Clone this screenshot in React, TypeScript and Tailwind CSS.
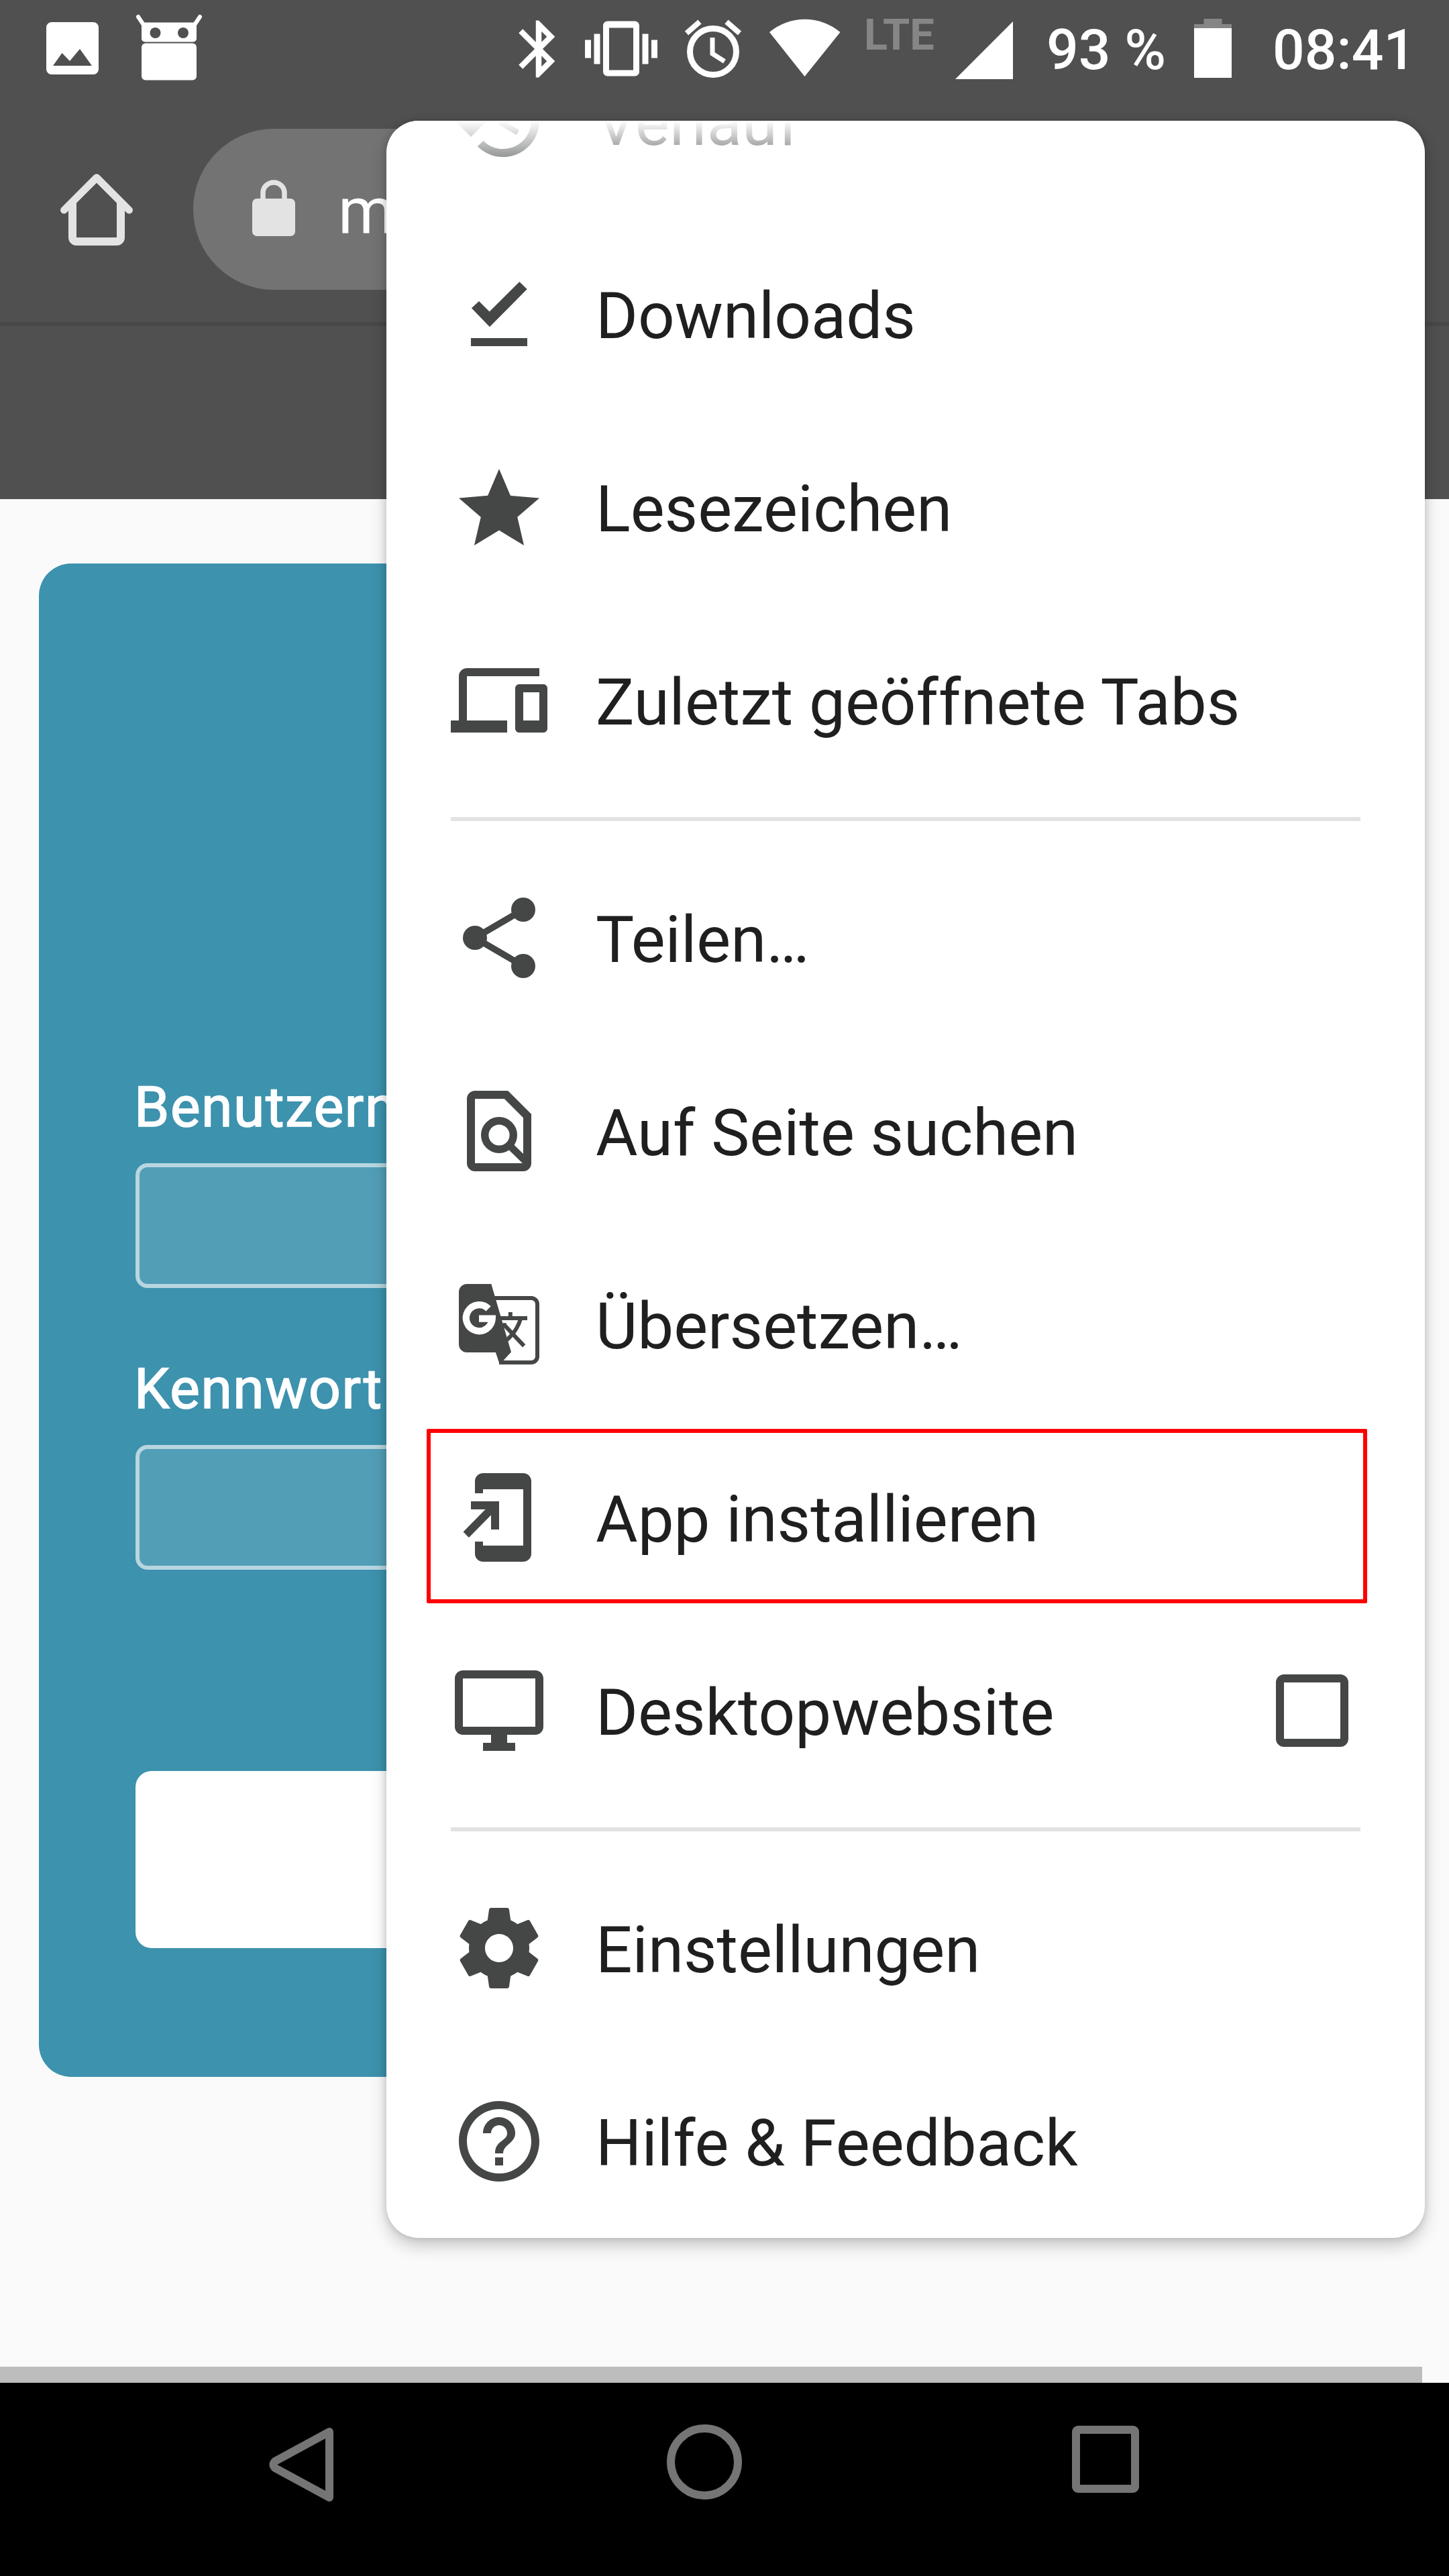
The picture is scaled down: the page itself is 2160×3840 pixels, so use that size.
import type { ReactNode } from "react";

function Icon({ children, className = "" }: { children: ReactNode; className?: string }) {
  return (
    <svg viewBox="0 0 24 24" fill="currentColor" className={`size-36 shrink-0 ${className}`}>
      {children}
    </svg>
  );
}

const icons = {
  history: (
    <path d="M13 3c-4.97 0-9 4.03-9 9H1l3.89 3.89.07.14L9 12H6c0-3.87 3.13-7 7-7s7 3.13 7 7-3.13 7-7 7c-1.93 0-3.68-.79-4.94-2.06l-1.42 1.42C8.27 19.99 10.51 21 13 21c4.97 0 9-4.03 9-9s-4.03-9-9-9zm-1 5v5l4.28 2.54.72-1.21-3.5-2.08V8H12z" />
  ),
  downloads: (
    <>
      <path d="M5.15 10.55 7 8.85 9.6 11.4 17.05 4 18.95 5.85 9.65 15.2z" />
      <path d="M5 18h14v2H5z" />
    </>
  ),
  star: (
    <path
      transform="translate(0 .5)"
      d="M12 17.27 18.18 21l-1.64-7.03L22 9.24l-7.19-.61L12 2 9.19 8.63 2 9.24l5.46 4.73L5.82 21z"
    />
  ),
  devices: (
    <path d="M4 6h18V4H4c-1.1 0-2 .9-2 2v11H0v3h14v-3H4V6zm19 2h-6c-.55 0-1 .45-1 1v10c0 .55.45 1 1 1h6c.55 0 1-.45 1-1V9c0-.55-.45-1-1-1zm-1 9h-4v-7h4v7z" />
  ),
  share: (
    <g>
      <path d="M18 5 6 12l12 7" fill="none" stroke="currentColor" strokeWidth="1.6" />
      <circle cx="18" cy="5" r="3" />
      <circle cx="6" cy="12" r="3" />
      <circle cx="18" cy="19" r="3" />
    </g>
  ),
  find: (
    <g>
      <path
        fillRule="evenodd"
        d="M6 2h8.2L20 7.8V20a2 2 0 0 1-2 2H6a2 2 0 0 1-2-2V4a2 2 0 0 1 2-2zm0 2v16h12V8.7L13.3 4z"
      />
      <circle cx="12" cy="13" r="3.55" fill="none" stroke="currentColor" strokeWidth="1.9" />
      <path d="m14.6 15.6 4.4 4.3" stroke="currentColor" strokeWidth="1.8" />
    </g>
  ),
  translate: (
    <g>
      <path
        d="M10.6 5.5H20A1.5 1.5 0 0 1 21.5 7v13a1.5 1.5 0 0 1-1.5 1.5h-8"
        fill="none"
        stroke="currentColor"
        strokeWidth="1"
      />
      <path d="M4 2h6.05L15 18.9 12.15 22l-1-3H4a2 2 0 0 1-2-2V4c0-1.1.9-2 2-2z" />
      <path
        d="M9.35 8.15A3.25 3.25 0 1 0 10.3 10.6H7"
        fill="none"
        stroke="#fff"
        strokeWidth="1.7"
      />
      <path
        d="M12.2 10.5H19M14.8 9v1.5M17.3 10.8C16.6 13 15.2 14.8 13.8 16M13.2 12.1l5 5.3M12.9 12.2h.9"
        fill="none"
        stroke="currentColor"
        strokeWidth="1"
      />
    </g>
  ),
  install: (
    <path d="M18 1H8c-1.1 0-2 .9-2 2v3h2V5h10v14H8v-1H6v3c0 1.1.9 2 2 2h10c1.1 0 2-.9 2-2V3c0-1.1-.9-2-2-2zm-8 14h2V8H5v2h3.59L3.1 15.6l1.4 1.4L10 11.41z" />
  ),
  desktop: (
    <path d="M21 2H3c-1.1 0-2 .9-2 2v12c0 1.1.9 2 2 2h7v2H8v2h8v-2h-2v-2h7c1.1 0 2-.9 2-2V4c0-1.1-.9-2-2-2zm0 14H3V4h18v12z" />
  ),
  settings: (
    <path d="M19.43 12.98c.04-.32.07-.64.07-.98s-.03-.66-.07-.98l2.11-1.65c.19-.15.24-.42.12-.64l-2-3.46c-.12-.22-.39-.3-.61-.22l-2.49 1c-.52-.4-1.08-.73-1.69-.98l-.38-2.65C14.46 2.18 14.25 2 14 2h-4c-.25 0-.46.18-.49.42l-.38 2.65c-.61.25-1.17.59-1.69.98l-2.49-1c-.23-.09-.49 0-.61.22l-2 3.46c-.13.22-.07.49.12.64l2.11 1.65c-.04.32-.07.65-.07.98s.03.66.07.98l-2.11 1.65c-.19.15-.24.42-.12.64l2 3.46c.12.22.39.3.61.22l2.49-1c.52.4 1.08.73 1.69.98l.38 2.65c.03.24.24.42.49.42h4c.25 0 .46-.18.49-.42l.38-2.65c.61-.25 1.17-.59 1.69-.98l2.49 1c.23.09.49 0 .61-.22l2-3.46c.12-.22.07-.49-.12-.64l-2.11-1.65zM12 15.5c-1.93 0-3.5-1.57-3.5-3.5s1.57-3.5 3.5-3.5 3.5 1.57 3.5 3.5-1.57 3.5-3.5 3.5z" />
  ),
  help: (
    <path d="M11 18h2v-2h-2v2zm1-16C6.48 2 2 6.48 2 12s4.48 10 10 10 10-4.48 10-10S17.52 2 12 2zm0 18c-4.41 0-8-3.59-8-8s3.59-8 8-8 8 3.59 8 8-3.59 8-8 8zm0-14c-2.21 0-4 1.79-4 4h2c0-1.1.9-2 2-2s2 .9 2 2c0 2-3 1.75-3 5h2c0-2.25 3-2.5 3-5 0-2.21-1.79-4-4-4z" />
  ),
};

function MenuItem({
  icon,
  label,
  checkbox,
  highlighted,
}: {
  icon: ReactNode;
  label: string;
  checkbox?: boolean;
  highlighted?: boolean;
}) {
  return (
    <li className="relative flex h-72 items-center gap-18 pr-[114px] pl-24">
      <Icon className="text-[#444746]">{icon}</Icon>
      <span className="pt-[6px] text-[96px] leading-[112px] whitespace-nowrap text-[#1f1f1f]">
        {label}
      </span>
      {checkbox && (
        <span className="ml-auto size-27 rounded-xl border-[12px] border-[#444746]" />
      )}
      {highlighted && (
        <span className="absolute top-3 left-[60px] h-65 w-[1402px] rounded-[2px] border-[6px] border-[#ff0000]" />
      )}
    </li>
  );
}

function Divider() {
  return <li className="mx-24 my-[30px] h-[6px] bg-[#e1e3e1]" />;
}

function Menu() {
  return (
    <div className="absolute top-45 left-144 h-[3156px] w-[1548px] overflow-hidden rounded-[48px] bg-white shadow-[0_12px_24px_rgba(0,0,0,0.2),0_0_12px_rgba(0,0,0,0.14)]">
      <ul className="-mt-36">
        <MenuItem icon={icons.history} label="Verlauf" />
        <MenuItem icon={icons.downloads} label="Downloads" />
        <MenuItem icon={icons.star} label="Lesezeichen" />
        <MenuItem icon={icons.devices} label="Zuletzt geöffnete Tabs" />
        <Divider />
        <MenuItem icon={icons.share} label="Teilen…" />
        <MenuItem icon={icons.find} label="Auf Seite suchen" />
        <MenuItem icon={icons.translate} label="Übersetzen…" />
        <MenuItem icon={icons.install} label="App installieren" highlighted />
        <MenuItem icon={icons.desktop} label="Desktopwebsite" checkbox />
        <Divider />
        <MenuItem icon={icons.settings} label="Einstellungen" />
        <MenuItem icon={icons.help} label="Hilfe & Feedback" />
      </ul>
      <div className="absolute inset-x-0 top-0 h-24 bg-linear-to-b from-white to-transparent" />
    </div>
  );
}

function StatusBar() {
  return (
    <header className="flex h-36 items-start text-white">
      <svg viewBox="69 0 78 144" className="ml-[69px] h-36 w-[78px]" fill="currentColor">
        <path
          fillRule="evenodd"
          d="M77 33h62a8 8 0 0 1 8 8v62a8 8 0 0 1-8 8H77a8 8 0 0 1-8-8V41a8 8 0 0 1 8-8zM79 98h58l-18-25-15 18-11.5-12z"
        />
      </svg>
      <svg viewBox="202 0 100 144" className="ml-[55px] h-36 w-[100px]" fill="currentColor">
        <path
          d="m206 25 8 12M298 25l-8 12"
          stroke="currentColor"
          strokeWidth="6"
          strokeLinecap="round"
        />
        <rect x="211" y="33.5" width="82" height="29" rx="5" />
        <rect x="211" y="64.5" width="82" height="55" rx="6" />
        <circle cx="231.5" cy="49" r="8" fill="#505050" />
        <circle cx="273" cy="49" r="8" fill="#505050" />
      </svg>
      <svg viewBox="0 0 24 24" className="mt-[22px] ml-[450px] size-[102px]" fill="currentColor">
        <path d="M17.71 7.71 12 2h-1v7.59L6.41 5 5 6.41 10.59 12 5 17.59 6.41 19 11 14.41V22h1l5.71-5.71-4.3-4.29 4.3-4.29zM13 5.83l1.88 1.88L13 9.59V5.83zm1.88 10.46L13 18.17v-3.76l1.88 1.88z" />
      </svg>
      <svg viewBox="0 0 24 24" className="mt-[19px] ml-[18px] size-27" fill="currentColor">
        <path d="M0 15h2V9H0v6zm3 2h2V7H3v10zm19-8v6h2V9h-2zm-3 8h2V7h-2v10zM16.5 2.8h-9C6.67 2.8 6 3.47 6 4.3v15.2c0 .83.67 1.5 1.5 1.5h9c.83 0 1.5-.67 1.5-1.5V4.3c0-.83-.67-1.5-1.5-1.5zM16 19H8V5h8v14z" />
      </svg>
      <svg
        viewBox="1020 0 86 144"
        className="ml-[40px] h-36 w-[86px]"
        fill="none"
        stroke="currentColor"
      >
        <circle cx="1063" cy="77" r="34.5" strokeWidth="9" />
        <path d="m1043 32.5-19.5 17M1083 32.5l19.5 17" strokeWidth="8" />
        <path d="M1062 56v24l18 11.5" strokeWidth="7" />
      </svg>
      <svg viewBox="1146 0 107 144" className="ml-[40px] h-36 w-[107px]" fill="currentColor">
        <path d="M1147 48a82 82 0 0 1 105.500 0l-53 66z" />
      </svg>
      <span className="mt-[15px] ml-[35px] w-[136px] text-[65px] leading-[74px] font-bold text-[#868686]">
        LTE
      </span>
      <svg viewBox="1424 0 86 144" className="h-36 w-[86px]" fill="currentColor">
        <path d="M1424 118h86V32z" />
      </svg>
      <span className="mt-[25px] ml-[50px] w-[220px] text-[84px] leading-[100px] font-medium whitespace-nowrap">
        93 %
      </span>
      <svg viewBox="1780 0 56 144" className="h-36 w-[56px]" fill="currentColor">
        <path d="M1780 42v-6h14.5v-8h27v8h14.5v6z" fill="#868686" />
        <path d="M1780 42h56v74h-56z" />
      </svg>
      <span className="mt-[25px] ml-[61px] text-[84px] leading-[100px] font-medium whitespace-nowrap">
        08:41
      </span>
    </header>
  );
}

function BrowserBar() {
  return (
    <div className="flex h-84 items-center pl-18 text-[#e3e3e3]">
      <Icon>
        <path
          fillRule="evenodd"
          d="M5 10.5 12 4l7 6.5V19a2 2 0 0 1-2 2H7a2 2 0 0 1-2-2zm2-.1V19h10v-8.6l-5-5z"
        />
        <path
          d="M3.9 12.2 12 4.1l8.1 8.1"
          fill="none"
          stroke="currentColor"
          strokeWidth="1.8"
          strokeLinecap="round"
          strokeLinejoin="round"
        />
      </Icon>
      <div className="ml-18 flex h-60 w-[1300px] items-center rounded-full bg-[#737373] pl-22">
        <svg viewBox="376 268 64 84" className="mb-[4px] h-21 w-16" fill="currentColor">
          <rect x="376" y="296" width="64" height="56" rx="7" />
          <path
            d="M392 300v-12.5a16 15.5 0 0 1 32 0V300"
            fill="none"
            stroke="currentColor"
            strokeWidth="7.5"
          />
        </svg>
        <span className="pt-[6px] pl-16 text-[96px] leading-[112px] text-white">m</span>
      </div>
    </div>
  );
}

function Field({ label }: { label: string }) {
  return (
    <label className="flex flex-col gap-[35px]">
      <span className="-ml-[2px] pt-[2px] text-[84px] leading-24 tracking-[1.6px] text-white [-webkit-text-stroke:1.6px_white]">
        {label}
      </span>
      <span className="h-[186px] rounded-[18px] border-[6px] border-[#b8d6e0] bg-[#529eb7]" />
    </label>
  );
}

function LoginPage() {
  return (
    <main className="flex h-[2808px] flex-col bg-[#fafafa] pt-24">
      <form className="mx-[58px] h-[2256px] rounded-[48px] bg-[#3d92ae] px-36 pt-[761px]">
        <div className="flex flex-col gap-[101px]">
          <Field label="Benutzername" />
          <Field label="Kennwort" />
        </div>
        <div className="mt-75 h-66 rounded-3xl bg-white" />
      </form>
      <div className="mt-auto h-6 w-[2120px] bg-[#bdbdbd]" />
    </main>
  );
}

function NavigationBar() {
  return (
    <nav className="flex h-72 bg-black text-[#757575]">
      <svg
        viewBox="402 3552 98 288"
        className="ml-[401px] h-72 w-[98px]"
        fill="none"
        stroke="currentColor"
        strokeWidth="12"
        strokeLinejoin="round"
      >
        <path d="M492 3625v98l-81-44q-5-5 0-10z" />
      </svg>
      <svg
        viewBox="994 3552 112 288"
        className="ml-[495px] h-72 w-28"
        fill="none"
        stroke="currentColor"
        strokeWidth="12"
      >
        <circle cx="1050" cy="3670" r="50" />
      </svg>
      <svg
        viewBox="1598 3552 101 288"
        className="ml-[492px] h-72 w-[101px]"
        fill="none"
        stroke="currentColor"
        strokeWidth="12"
      >
        <rect x="1604" y="3622" width="88" height="88" rx="3" />
      </svg>
    </nav>
  );
}

export default function App() {
  return (
    <div className="relative h-[3840px] w-[2160px] overflow-hidden bg-[#505050] font-['Roboto',sans-serif]">
      <StatusBar />
      <BrowserBar />
      <div className="h-66 border-t-[6px] border-[#484848]" />
      <LoginPage />
      <NavigationBar />
      <Menu />
    </div>
  );
}
